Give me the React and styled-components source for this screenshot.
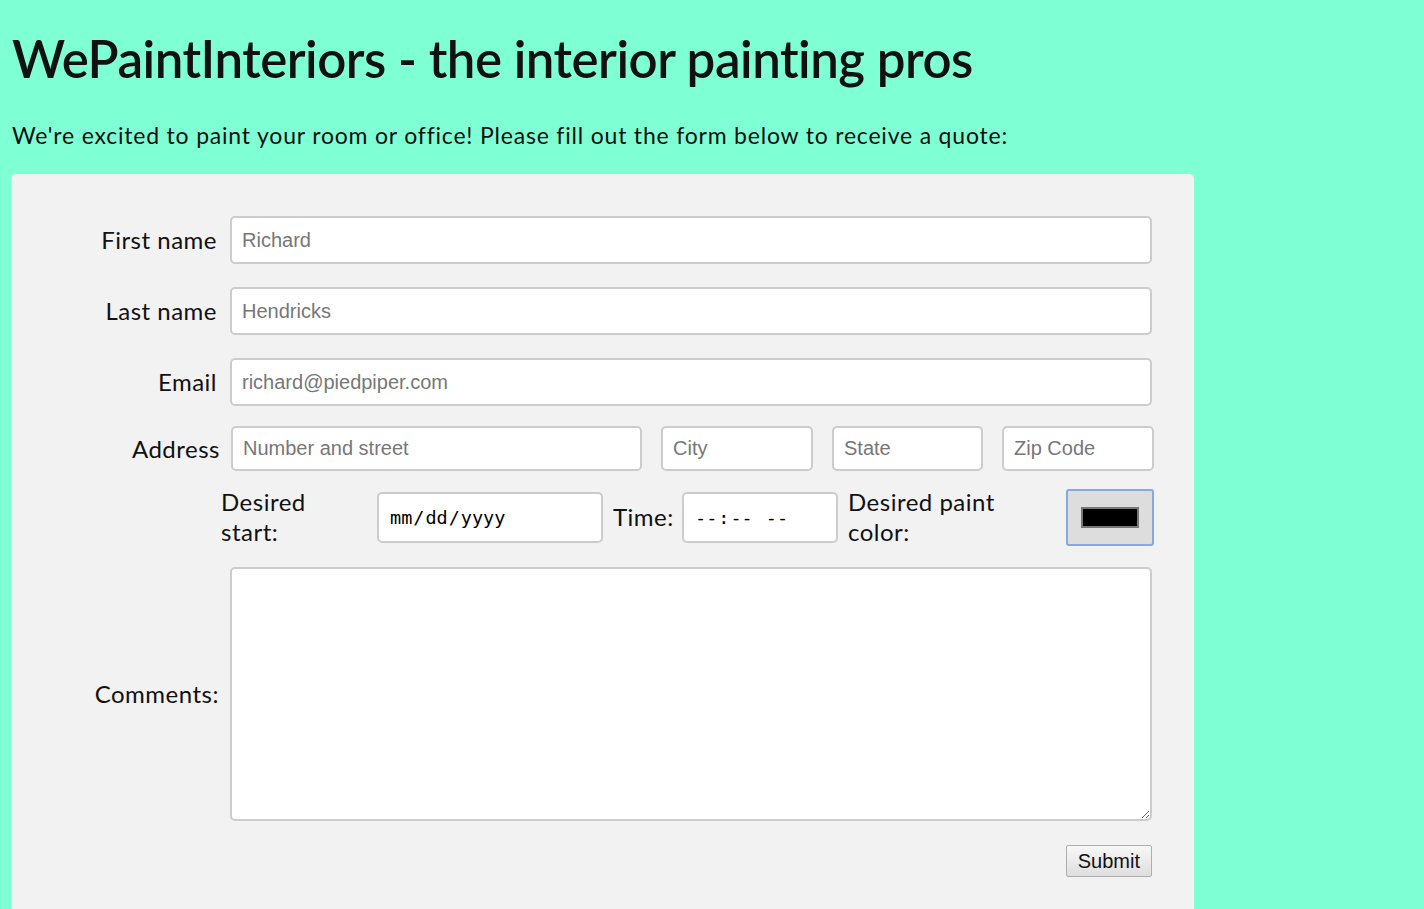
import React from 'react';
import styled, { createGlobalStyle } from 'styled-components';

const GlobalStyle = createGlobalStyle`
  body {
    margin: 0;
    background: #7fffd4;
    font-family: "Lato", "Open Sans", sans-serif;
    color: #111;
  }
`;

const Page = styled.div`
  padding: 0 11px;
`;

const Title = styled.h1`
  margin: 0;
  padding-top: 27px;
  padding-left: 1px;
  font-size: 51px;
  font-weight: 600;
  line-height: 64px;
  letter-spacing: -0.5px;
`;

const Intro = styled.p`
  margin: 29px 0 24px 1px;
  font-size: 23px;
  line-height: 30px;
  letter-spacing: 0.8px;
`;

const Form = styled.form`
  width: 1183px;
  box-sizing: border-box;
  background: #f2f2f2;
  border-radius: 5px;
  padding: 42px 42px 40px 0;
`;

const Row = styled.div`
  display: flex;
  align-items: center;
  margin-bottom: ${(p) => p.$gap}px;
  padding-left: ${(p) => p.$indent || 0}px;
`;

const Label = styled.label`
  flex: none;
  width: ${(p) => p.$width}px;
  margin-right: ${(p) => p.$space}px;
  text-align: ${(p) => p.$align || 'right'};
  font-size: 24px;
  line-height: 30px;
  letter-spacing: 0.5px;
`;

const TextInput = styled.input`
  box-sizing: border-box;
  flex: ${(p) => (p.$width ? 'none' : '1')};
  width: ${(p) => (p.$width ? `${p.$width}px` : 'auto')};
  height: ${(p) => p.$height}px;
  margin-right: ${(p) => p.$space || 0}px;
  border: 2px solid #cccccc;
  border-radius: 5px;
  background: #fff;
  padding: 0 10px;
  font-family: "Liberation Sans", Arial, sans-serif;
  font-size: 20px;
  color: #222;
  outline: none;

  &::placeholder {
    color: #777;
  }
`;

const PickerInput = styled.input`
  box-sizing: border-box;
  flex: none;
  width: ${(p) => p.$width}px;
  height: 51px;
  margin-right: ${(p) => p.$space}px;
  border: 2px solid #cccccc;
  border-radius: 5px;
  background: #fff;
  padding: 0 10px;
  font-family: "DejaVu Sans Mono", monospace;
  font-size: 18.5px;
  color: #000;
  outline: none;

  &::-webkit-calendar-picker-indicator {
    display: none;
  }
`;

const ColorInput = styled.input`
  box-sizing: border-box;
  flex: none;
  width: 88px;
  height: 57px;
  padding: 0;
  margin: 0;
  border: 2px solid #86a8e6;
  border-radius: 3px;
  background: #dddddd;
  cursor: pointer;

  &::-webkit-color-swatch-wrapper {
    padding: 16px 13px;
  }

  &::-webkit-color-swatch {
    border: 2px solid #777;
    border-radius: 0;
  }
`;

const Comments = styled.textarea`
  box-sizing: border-box;
  flex: 1;
  height: 254px;
  border: 2px solid #cccccc;
  border-radius: 5px;
  background: #fff;
  padding: 10px;
  font-family: "Liberation Sans", Arial, sans-serif;
  font-size: 20px;
  outline: none;
`;

const Actions = styled.div`
  display: flex;
  justify-content: flex-end;
`;

const SubmitButton = styled.button`
  height: 32px;
  padding: 0 11px;
  border: 1px solid #adadad;
  border-radius: 2px;
  background: linear-gradient(#f7f7f7, #dedede);
  font-family: "Liberation Sans", Arial, sans-serif;
  font-size: 20px;
  color: #111;
`;

export default function App() {
  return (
    <Page>
      <GlobalStyle />
      <Title>WePaintInteriors - the interior painting pros</Title>
      <Intro>
        We're excited to paint your room or office! Please fill out the form below to receive a quote:
      </Intro>
      <Form onSubmit={(e) => e.preventDefault()}>
        <Row $gap={23}>
          <Label $width={206} $space={13}>First name</Label>
          <TextInput $height={48} placeholder="Richard" />
        </Row>
        <Row $gap={23}>
          <Label $width={206} $space={13}>Last name</Label>
          <TextInput $height={48} placeholder="Hendricks" />
        </Row>
        <Row $gap={20}>
          <Label $width={206} $space={13}>Email</Label>
          <TextInput $height={48} placeholder="richard@piedpiper.com" />
        </Row>
        <Row $gap={16}>
          <Label $width={209} $space={11}>Address</Label>
          <TextInput $height={45} $width={411} $space={19} placeholder="Number and street" />
          <TextInput $height={45} $width={152} $space={19} placeholder="City" />
          <TextInput $height={45} $width={151} $space={19} placeholder="State" />
          <TextInput $height={45} $width={152} placeholder="Zip Code" />
        </Row>
        <Row $gap={20} $indent={210}>
          <Label $width={100} $space={56} $align="left">Desired start:</Label>
          <PickerInput type="date" $width={226} $space={10} />
          <Label $width={58} $space={11} $align="left">Time:</Label>
          <PickerInput type="time" $width={156} $space={10} />
          <Label $width={160} $space={58} $align="left">Desired paint color:</Label>
          <ColorInput type="color" defaultValue="#000000" />
        </Row>
        <Row $gap={24}>
          <Label $width={208} $space={11}>Comments:</Label>
          <Comments />
        </Row>
        <Actions>
          <SubmitButton type="submit">Submit</SubmitButton>
        </Actions>
      </Form>
    </Page>
  );
}
